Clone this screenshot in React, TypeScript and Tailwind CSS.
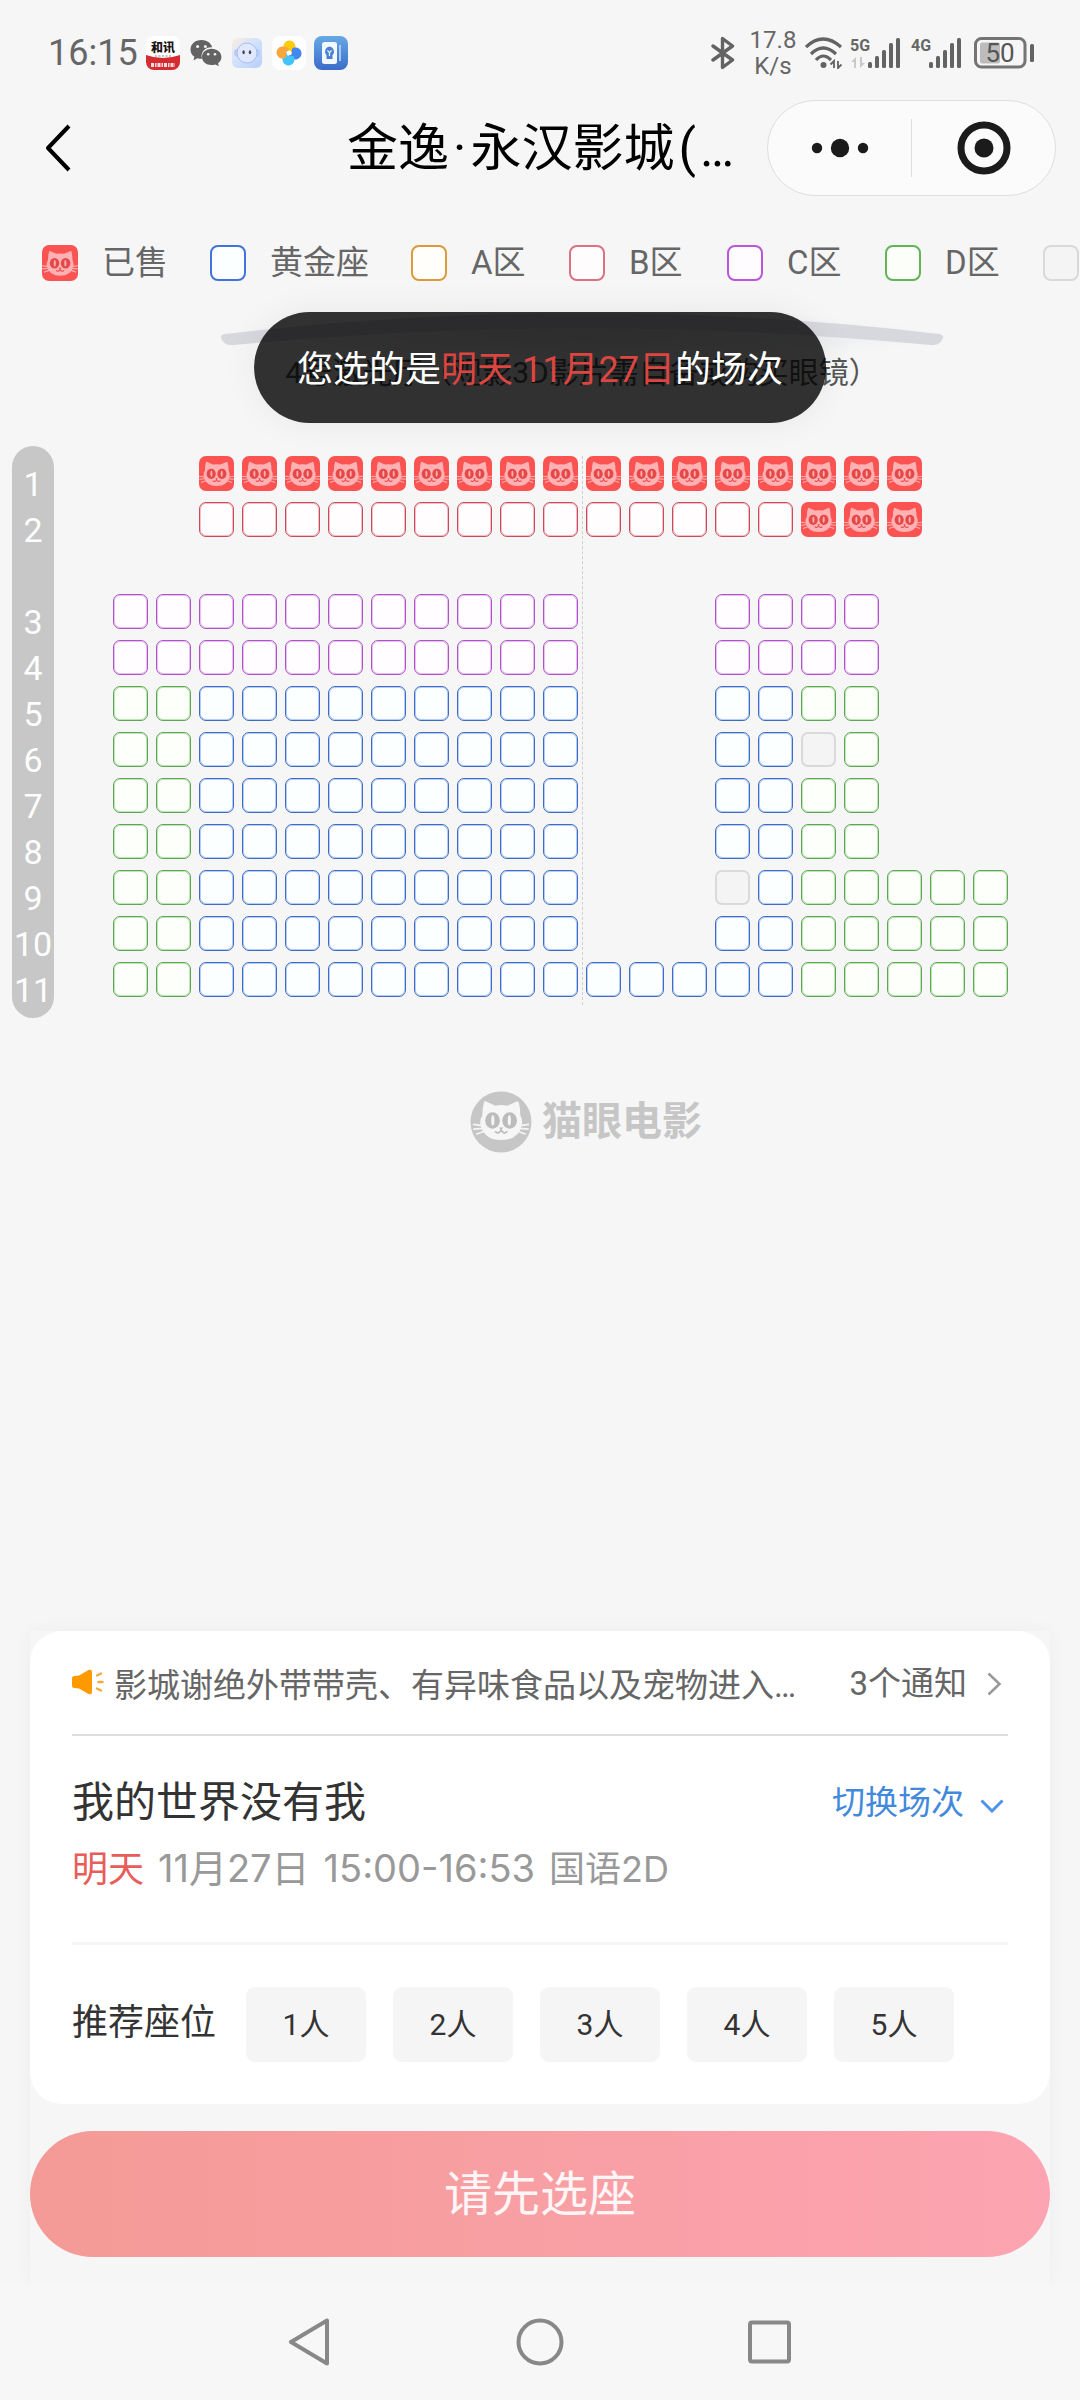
import React from "react";

type SeatKind = "sold" | "gold" | "a" | "b" | "c" | "d" | "off";

const legendStyle: Record<Exclude<SeatKind, "sold">, string> = {
  gold: "border-[#4272dc] bg-[#fcffff]",
  a: "border-[#dd9a3a] bg-[#fffefa]",
  b: "border-[#dc7184] bg-[#fffcfd]",
  c: "border-[#bb56dc] bg-[#fffcff]",
  d: "border-[#62b457] bg-[#fcfff9]",
  off: "border-[#d9d9d9] bg-[#f4f4f4]",
};

const seatStyle: Record<Exclude<SeatKind, "sold">, string> = {
  gold: "border border-[#3f6cc0] bg-[#fcffff] shadow-[inset_0_0_0_1px_#b4cdfb]",
  a: "border border-[#d99a40] bg-[#fffefa] shadow-[inset_0_0_0_1px_#ffe0ac]",
  b: "border border-[#c44c5b] bg-[#fffdfe] shadow-[inset_0_0_0_1px_#f7bcc5]",
  c: "border border-[#ab55c4] bg-[#fffdff] shadow-[inset_0_0_0_1px_#ecbdf6]",
  d: "border border-[#60a457] bg-[#fdfffb] shadow-[inset_0_0_0_1px_#bce8b4]",
  off: "border-2 border-[#dadada] bg-[#f4f4f4]",
};

const kindName: Record<SeatKind, string> = {
  sold: "已售",
  gold: "黄金座",
  a: "A区",
  b: "B区",
  c: "C区",
  d: "D区",
  off: "不可售",
};

const codes: Record<string, SeatKind> = { x: "sold", g: "gold", b: "b", c: "c", d: "d", o: "off" };

// One character per column; "." is an empty place.
const rows: { label: string; seats: string }[] = [
  { label: "1", seats: "..xxxxxxxxxxxxxxxxx..." },
  { label: "2", seats: "..bbbbbbbbbbbbbbxxx..." },
  { label: "", seats: "......................" },
  { label: "3", seats: "ccccccccccc...cccc...." },
  { label: "4", seats: "ccccccccccc...cccc...." },
  { label: "5", seats: "ddggggggggg...ggdd...." },
  { label: "6", seats: "ddggggggggg...ggod...." },
  { label: "7", seats: "ddggggggggg...ggdd...." },
  { label: "8", seats: "ddggggggggg...ggdd...." },
  { label: "9", seats: "ddggggggggg...ogddddd." },
  { label: "10", seats: "ddggggggggg...ggddddd." },
  { label: "11", seats: "ddggggggggggggggddddd." },
];

const legend: SeatKind[] = ["sold", "gold", "a", "b", "c", "d", "off"];

function CatShape({ face, eye }: { face: string; eye: string }) {
  return (
    <g>
      <path
        d="M7 6 Q7.6 5.6 8.2 6 L14 8.6 Q17.5 7.8 21.5 8.6 L27.3 6 Q28.2 5.6 28.6 6.4 Q29.6 10 29.6 14.5 Q31 17 30.6 20.4 Q28.5 30 17.6 30 Q7 30 4.6 20.4 Q4.2 17 5.9 14.5 Q5.8 10 7 6Z"
        fill={face}
      />
      <path
        d="M0 20.2 L6 21 M0.2 23.2 L6.4 22.8 M2 26.4 L7.6 24.4 M35 20.2 L29.2 21 M34.8 23.2 L28.8 22.8 M33 26.4 L27.6 24.4"
        stroke={face}
        strokeWidth="1.1"
      />
      <ellipse cx="12.2" cy="17.8" rx="4.6" ry="5.1" fill={eye} />
      <ellipse cx="22.9" cy="17.8" rx="4.6" ry="5.1" fill={eye} />
      <ellipse cx="12.4" cy="17.8" rx="1" ry="3.2" fill={face} />
      <ellipse cx="22.7" cy="17.8" rx="1" ry="3.2" fill={face} />
      <path d="M16.2 22.2 H18.9 L17.6 23.8Z" fill={eye} />
      <path d="M13.8 24.6 Q15.8 26.8 17.6 23.8 Q19.4 26.8 21.4 24.6" fill="none" stroke={eye} strokeWidth="1.1" />
    </g>
  );
}

function SoldIcon() {
  return (
    <svg viewBox="0 0 35 35" className="block size-full" aria-hidden="true">
      <rect width="35" height="35" rx="7" fill="#fb5351" />
      <CatShape face="#ffb1b3" eye="#e64848" />
    </svg>
  );
}

function Signal({ tag, idle }: { tag: string; idle?: boolean }) {
  return (
    <svg viewBox="0 0 50 32" className="h-8 w-[50px] overflow-visible" role="img" aria-label={tag}>
      <text x="-1" y="14" fontSize="16" fontWeight="700" fontFamily="Roboto, sans-serif" fill="#666">
        {tag}
      </text>
      {idle && <path d="M0 25 L5 20 V31 H3 V25Z M9 20 V31 L14 26 H11 V20Z" fill="#c9c9c9" />}
      <g fill="#636363">
        <rect x="17" y="25" width="4" height="6" rx="1.5" />
        <rect x="24" y="19" width="4" height="12" rx="1.5" />
        <rect x="31" y="13" width="4" height="18" rx="1.5" />
        <rect x="38" y="6" width="4" height="25" rx="1.5" />
        <rect x="45" y="1" width="4" height="30" rx="1.5" />
      </g>
    </svg>
  );
}

function StatusBar() {
  return (
    <div className="flex h-[100px] items-center pt-1.5 pr-[46px] pl-12 text-[#666]">
      <span className="text-[36px] leading-10">16:15</span>
      <div className="ml-2 flex items-center gap-2">
        <svg viewBox="0 0 34 34" className="size-[34px]" role="img" aria-label="和讯">
          <defs>
            <clipPath id="hx"><rect width="34" height="34" rx="8" /></clipPath>
          </defs>
          <g clipPath="url(#hx)">
            <rect width="34" height="34" fill="#fefefe" />
            <path d="M0 19 Q17 25 34 19 V34 H0Z" fill="#d42c30" />
            <text x="17" y="16" fontSize="12" fontWeight="900" textAnchor="middle" fill="#1c1414" fontFamily="'Noto Sans CJK SC', sans-serif">和讯</text>
            <path d="M9 20 H26" stroke="#888" strokeWidth="1" strokeDasharray="2 1.5" />
            <path d="M5 29 H29" stroke="#fff" strokeWidth="4" strokeDasharray="3 1 1.5 1" opacity=".85" />
          </g>
        </svg>
        <svg viewBox="0 0 32 28" className="ml-0.5 h-7 w-8" role="img" aria-label="微信">
          <path d="M11.5 1 C5 1 0.5 5.2 0.5 10.4 C0.5 13.4 2 16 4.4 17.8 L3.4 21.4 L7.4 19.2 C9 19.7 10 19.8 12 19.8 C9.8 12 17 7.6 22.2 8.4 C21 4 16.8 1 11.5 1Z" fill="#636363" />
          <path d="M21.6 9.8 C16 9.8 12 13.4 12 18 C12 22.6 16 26 21.6 26 C23 26 24 25.8 25.4 25.4 L28.8 27.2 L28 24.2 C30.2 22.6 31.4 20.4 31.4 18 C31.4 13.4 27.2 9.8 21.6 9.8Z" fill="#636363" />
          <g fill="#f5f5f5">
            <circle cx="7.6" cy="7.4" r="1.5" />
            <circle cx="15.4" cy="7.4" r="1.5" />
            <circle cx="18.2" cy="15.2" r="1.3" />
            <circle cx="25" cy="15.2" r="1.3" />
          </g>
        </svg>
        <svg viewBox="0 0 30 30" className="mx-0.5 size-[30px]" role="img" aria-label="助手">
          <defs>
            <linearGradient id="face" x1="0" y1="0" x2="1" y2="1">
              <stop offset="0" stopColor="#fdeedd" />
              <stop offset=".4" stopColor="#d6e4fb" />
              <stop offset="1" stopColor="#b4cffb" />
            </linearGradient>
          </defs>
          <rect width="30" height="30" rx="6" fill="url(#face)" />
          <rect x="2" y="11" width="26" height="8" rx="4" fill="#b9ccf8" />
          <circle cx="15" cy="15" r="10" fill="#dfe8fd" stroke="#a9bcf3" />
          <ellipse cx="11.6" cy="14.2" rx="1.2" ry="2" fill="#4c4358" />
          <ellipse cx="18" cy="14.2" rx="1.2" ry="2" fill="#4c4358" />
        </svg>
        <svg viewBox="0 0 34 34" className="size-[34px]" role="img" aria-label="风车">
          <rect width="34" height="34" rx="8" fill="#fff" />
          <path d="M17 14 Q11.5 15.5 11.5 11 A6 6 0 0 1 23.4 9.5 Q24.5 16 19.5 17.5 Q19.5 14.5 17 14Z" fill="#fdcb0a" />
          <path d="M20 17 Q18.5 11.5 23 11.5 A6 6 0 0 1 24.5 23.4 Q18 24.5 16.5 19.5 Q19.5 19.5 20 17Z" fill="#4288ee" />
          <path d="M17 20 Q22.5 18.5 22.5 23 A6 6 0 0 1 10.6 24.5 Q9.5 18 14.5 16.5 Q14.5 19.5 17 20Z" fill="#41c3fb" />
          <path d="M14 17 Q15.5 22.5 11 22.5 A6 6 0 0 1 9.5 10.6 Q16 9.5 17.5 14.5 Q14.5 14.5 14 17Z" fill="#f8a63e" />
        </svg>
        <svg viewBox="0 0 34 34" className="size-[34px]" role="img" aria-label="锦囊">
          <defs>
            <linearGradient id="tip" x1="0" y1="0" x2="0" y2="1">
              <stop offset="0" stopColor="#66a9e6" />
              <stop offset="1" stopColor="#3c6cc9" />
            </linearGradient>
          </defs>
          <rect width="34" height="34" rx="8" fill="url(#tip)" />
          <rect x="8" y="6" width="15" height="22" rx="2.5" fill="#f3f8ff" />
          <path d="M26 9 V25" stroke="#a9c9f2" strokeWidth="2" />
          <path d="M15.5 10.5 A5 5 0 0 1 18.5 19 V23 H12.5 V19 A5 5 0 0 1 15.5 10.5Z" fill="#4a80d4" />
          <path d="M13.4 14.4 L15.5 16.6 L17.6 14.4 M15.5 16.6 V20" stroke="#f3f8ff" strokeWidth="1.2" fill="none" />
        </svg>
      </div>
      <div className="ml-auto flex items-center">
        <svg viewBox="0 0 24 34" className="h-[34px] w-6" fill="none" stroke="#636363" strokeWidth="3.4" strokeLinejoin="round" strokeLinecap="round" role="img" aria-label="蓝牙">
          <path d="M2 10 L21.5 24 L11.5 31.5 V2.5 L21.5 10 L2 24" />
        </svg>
        <div className="ml-3.5 w-12 text-center text-[24px] leading-[26px]">
          17.8
          <br />
          K/s
        </div>
        <svg viewBox="0 0 38 32" className="ml-2 h-8 w-[38px]" fill="none" stroke="#636363" strokeWidth="3.2" role="img" aria-label="无线网络">
          <path d="M1 10 Q18 -6 36 10" />
          <path d="M6 17 Q18 5 31 17" />
          <path d="M11 23 Q18 15 26 23" />
          <circle cx="18.5" cy="28" r="3" fill="#636363" stroke="none" />
          <path d="M25.5 27.5 L29 24 V31 M33 24 V31 L36.5 27.5" strokeWidth="1.8" />
        </svg>
        <div className="ml-2">
          <Signal tag="5G" idle />
        </div>
        <div className="ml-[11px]">
          <Signal tag="4G" />
        </div>
        <svg viewBox="0 0 60 32" className="ml-3 h-8 w-[60px]" role="img" aria-label="电量">
          <rect x="1.5" y="1.5" width="49.5" height="28.5" rx="6" fill="none" stroke="#747474" strokeWidth="3" />
          <rect x="6" y="5.5" width="20" height="21" rx="2" fill="#bcbcbc" />
          <rect x="56" y="7" width="4" height="18" rx="1.5" fill="#636363" />
          <text x="26" y="25" fontSize="26" textAnchor="middle" fill="#555" fontFamily="Roboto, sans-serif">50</text>
        </svg>
      </div>
    </div>
  );
}

function Header() {
  return (
    <header className="flex h-24 items-center pr-6 pl-[44px]">
      <button type="button" aria-label="返回" className="h-12 w-7">
        <svg viewBox="0 0 28 48" className="h-12 w-7" fill="none" stroke="#000" strokeWidth="4" strokeLinejoin="round">
          <path d="M25 2 L4 24 L25 46" />
        </svg>
      </button>
      <h1 className="mr-[33px] ml-auto pt-0.5 text-[51px] leading-[60px] text-black">
        金逸<span className="mx-1">·</span>永汉影城<span className="mx-1">(</span>…
      </h1>
      <div className="flex h-24 w-[289px] items-center rounded-full border border-[#dedede] bg-[#fbfbfb]">
        <button type="button" aria-label="更多" className="flex h-full flex-1 items-center justify-center">
          <svg viewBox="0 0 58 20" className="h-5 w-[58px]" fill="#1b1b1b">
            <circle cx="6" cy="10" r="5.2" />
            <circle cx="29" cy="10" r="9.2" />
            <circle cx="52" cy="10" r="5.2" />
          </svg>
        </button>
        <span className="h-[58px] w-px bg-[#dedede]" />
        <button type="button" aria-label="关闭" className="flex h-full flex-1 items-center justify-center">
          <svg viewBox="0 0 54 54" className="size-[54px]">
            <circle cx="27" cy="27" r="23" fill="none" stroke="#1b1b1b" strokeWidth="7" />
            <circle cx="27" cy="27" r="9.5" fill="#1b1b1b" />
          </svg>
        </button>
      </div>
    </header>
  );
}

function Legend() {
  return (
    <ul className="mt-[49px] flex h-9 items-center gap-[42px] overflow-hidden pl-[42px] text-[33px] leading-9 whitespace-nowrap text-[#666]">
      {legend.map((kind) => (
        <li key={kind} className="flex shrink-0 items-center gap-6">
          {kind === "sold" ? (
            <span className="size-9"><SoldIcon /></span>
          ) : (
            <span className={"size-9 rounded-lg border-2 " + legendStyle[kind]} />
          )}
          {kind !== "off" && (
            <span className={kindName[kind].length === 2 && kind !== "sold" ? "w-14" : ""}>{kindName[kind]}</span>
          )}
        </li>
      ))}
    </ul>
  );
}

function Seat({ code, row, column }: { code: string; row: string; column: number }) {
  if (code === ".") return <span />;
  const kind = codes[code];
  const label = `${row}排${column}座 ${kindName[kind]}`;
  if (kind === "sold") {
    return (
      <button type="button" disabled aria-label={label} className="size-[35px]">
        <SoldIcon />
      </button>
    );
  }
  return (
    <button type="button" disabled={kind === "off"} aria-label={label} className={"size-[35px] rounded-[7px] " + seatStyle[kind]} />
  );
}

function SeatMap() {
  return (
    <section className="mt-[23px]">
      <div className="flex flex-col items-center pl-[84px]">
        <svg viewBox="0 0 780 60" className="h-[60px] w-[780px]" aria-hidden="true">
          <defs>
            <radialGradient id="glow">
              <stop offset="0" stopColor="#e0e1e7" />
              <stop offset=".7" stopColor="#eeeff1" stopOpacity=".8" />
              <stop offset="1" stopColor="#f6f6f6" stopOpacity="0" />
            </radialGradient>
          </defs>
          <ellipse cx="390" cy="32" rx="388" ry="28" fill="url(#glow)" />
          <path d="M29 34 Q28 31 33 30 Q390 -12 747 30 Q752 31 751 34 Q748 42 739 41 Q390 8 41 41 Q32 42 29 34Z" fill="#d7d8de" />
        </svg>
        <p className="-mt-4 text-[30px] leading-[50px] text-[#555]">4号激光厅（观影3D影片需自备或购买眼镜）</p>
      </div>
      <div className="mt-12 flex items-start">
        <ol className="ml-3 w-[42px] shrink-0 rounded-full bg-[#c7c7c7] pt-[15px] pb-[5px] text-center text-[34px] leading-[46px] text-[#fdfdfd]">
          {rows.map((row, i) => (
            <li key={i} className="h-[46px]">{row.label}</li>
          ))}
        </ol>
        <div className="flex flex-1 justify-center pt-2.5 pl-[30px]">
          <div className="relative flex flex-col gap-[11px] pb-2">
            {rows.map((row, i) => (
              <div key={i} className="grid h-[35px] grid-cols-[repeat(22,35px)] gap-2">
                {row.seats.split("").map((code, j) => (
                  <Seat key={j} code={code} row={row.label} column={j + 1} />
                ))}
              </div>
            ))}
            <span className="absolute inset-y-0 left-1/2 border-l border-dashed border-[#cfcfcf]" />
          </div>
        </div>
      </div>
      <div className="mt-[73px] flex items-center justify-center gap-2.5 pl-[92px] text-[#c6c6c6]">
        <svg viewBox="0 0 62 62" className="size-[62px]" aria-hidden="true">
          <circle cx="31" cy="31" r="30.5" fill="#c6c6c6" />
          <g transform="translate(3 1) scale(1.6)">
            <CatShape face="#f6f6f6" eye="#bcbcbc" />
          </g>
        </svg>
        <span className="text-[40px] leading-[60px] font-bold">猫眼电影</span>
      </div>
    </section>
  );
}

function SessionCard() {
  return (
    <div className="rounded-[32px] bg-white px-[42px] pb-[42px] text-[#333]">
      <div className="flex h-[105px] items-center border-b-2 border-[#dedede] pt-1.5 text-[33px] leading-[44px] text-[#666]">
        <svg viewBox="0 0 32 26" className="mb-2 h-[26px] w-8 shrink-0" aria-hidden="true">
          <path d="M2.5 7 L7 6.5 L17 0.8 Q20 0 20 3 V23 Q20 26 17 25.2 L7 19.5 L2.5 19 Q0 19 0 16.5 V9.5 Q0 7 2.5 7Z" fill="#ff9900" />
          <path d="M25 6.5 L29 4.5 M26.5 13 H30.5 M25 19.5 L29 21.5" stroke="#f5a93a" strokeWidth="2.4" strokeLinecap="round" />
        </svg>
        <p className="ml-2.5 min-w-0 flex-1 truncate">影城谢绝外带带壳、有异味食品以及宠物进入影厅观影</p>
        <a href="#notices" className="ml-9 flex shrink-0 items-center pb-1">
          3个通知
          <svg viewBox="0 0 15 24" className="mr-1.5 ml-5 h-6 w-[15px]" fill="none" stroke="#999" strokeWidth="2.5" aria-hidden="true">
            <path d="M1.5 1.5 L12.5 12 L1.5 22.5" />
          </svg>
        </a>
      </div>
      <div className="mt-[37px] flex items-center justify-between">
        <h2 className="text-[42px] leading-[60px]">我的世界没有我</h2>
        <button type="button" className="flex items-center text-[33px] leading-[44px] text-[#4189dc]">
          切换场次
          <svg viewBox="0 0 24 14" className="mt-1.5 mr-1 ml-4 h-3.5 w-6" fill="none" stroke="#4f94e6" strokeWidth="3" aria-hidden="true">
            <path d="M1.5 1.5 L12 12 L22.5 1.5" />
          </svg>
        </button>
      </div>
      <p className="mt-2 flex items-baseline gap-3.5 font-[Inter,'Noto_Sans_CJK_SC',sans-serif] text-[36px] leading-[54px] whitespace-nowrap text-[#999]">
        <span className="text-[#e85c5a]">明天</span>
        <span className="text-[38px]">11月27日</span>
        <span className="text-[38px]">15:00-16:53</span>
        <span>国语2D</span>
      </p>
      <div className="mt-[46px] border-t-[3px] border-[#f5f5f5]" />
      <div className="mt-[42px] flex h-[75px] items-center gap-[27px]">
        <span className="w-[147px] pb-1 text-[36px] leading-[54px]">推荐座位</span>
        {[1, 2, 3, 4, 5].map((count) => (
          <button key={count} type="button" className="h-full w-[120px] rounded-[9px] bg-[#f5f5f5] text-[30px]">
            {count}人
          </button>
        ))}
      </div>
    </div>
  );
}

function NavBar() {
  return (
    <nav className="flex h-[116px] items-center justify-center gap-[182px] bg-[#f7f7f7]" aria-label="系统导航">
      <button type="button" aria-label="后退">
        <svg viewBox="0 0 48 48" className="size-12" fill="none" stroke="#888" strokeWidth="4" strokeLinejoin="round">
          <path d="M41 2.5 V45.5 L5 24Z" />
        </svg>
      </button>
      <button type="button" aria-label="主页">
        <svg viewBox="0 0 48 48" className="size-12" fill="none" stroke="#888" strokeWidth="4">
          <circle cx="24" cy="24" r="21.5" />
        </svg>
      </button>
      <button type="button" aria-label="最近任务">
        <svg viewBox="0 0 48 48" className="size-12" fill="none" stroke="#888" strokeWidth="4">
          <rect x="4" y="4.5" width="39" height="39" rx="2" />
        </svg>
      </button>
    </nav>
  );
}

export default function App() {
  return (
    <div className="relative flex min-h-screen flex-col overflow-hidden bg-[#f6f6f6] font-[Roboto,'Noto_Sans_CJK_SC',sans-serif]">
      <StatusBar />
      <Header />
      <Legend />
      <SeatMap />
      <div
        role="status"
        className="absolute top-[312px] left-1/2 flex h-[111px] -translate-x-1/2 items-center rounded-full bg-black/80 px-[43px] pt-1 text-[36px] whitespace-nowrap text-white shadow-[0_0_36px_rgba(0,0,0,0.06)]"
      >
        <p>
          您选的是<span className="text-[#dc4540]">明天 11月27日</span>的场次
        </p>
      </div>
      <div className="mx-[30px] mt-auto bg-[#f6f6f6] pb-[27px] shadow-[0_0_18px_rgba(0,0,0,0.04)]">
        <SessionCard />
        <button
          type="button"
          className="mt-[27px] h-[126px] w-full rounded-full bg-linear-to-r from-[#f49a96] to-[#fca4b1] pt-0.5 text-[48px] text-white/90"
        >
          请先选座
        </button>
      </div>
      <NavBar />
    </div>
  );
}
